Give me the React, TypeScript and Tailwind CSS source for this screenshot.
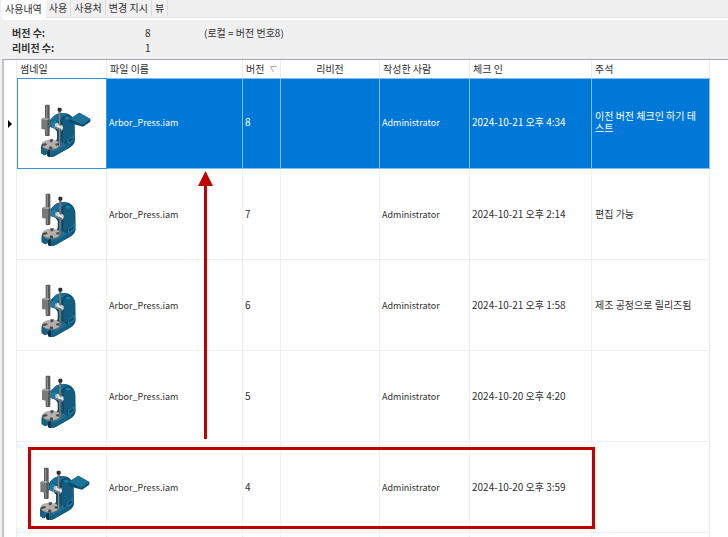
interface VersionRow {
  version: number;
  checkedIn: string;
  comment: string;
  handle?: boolean;
}

const TABS = ["사용내역", "사용", "사용처", "변경 지시", "뷰"];

const ROWS: VersionRow[] = [
  {
    version: 8,
    checkedIn: "2024-10-21 오후 4:34",
    comment: "이전 버전 체크인 하기 테스트",
    handle: true,
  },
  { version: 7, checkedIn: "2024-10-21 오후 2:14", comment: "편집 가능" },
  {
    version: 6,
    checkedIn: "2024-10-21 오후 1:58",
    comment: "제조 공정으로 릴리즈됨",
  },
  { version: 5, checkedIn: "2024-10-20 오후 4:20", comment: "" },
  { version: 4, checkedIn: "2024-10-20 오후 3:59", comment: "", handle: true },
];

export default function App() {
  return (
    <div className="flex h-screen flex-col overflow-hidden bg-[#f0f0f0] font-['Noto_Sans_CJK_KR',sans-serif] text-[10px] leading-3 text-[#303030]">
      <TabBar />
      <Summary />
      <div className="relative ml-0.5 flex-1 overflow-hidden border-t border-l-2 border-t-[#a5a5ad] border-l-[#c4c4c8] bg-white">
        <VersionTable />
        <Annotations />
      </div>
    </div>
  );
}

function TabBar() {
  return (
    <div
      role="tablist"
      className="flex h-[18px] border-b border-[#e3e3e3] pl-px"
    >
      {TABS.map((tab, i) => (
        <button
          key={tab}
          role="tab"
          aria-selected={i === 0}
          className={
            i === 0
              ? "h-[18px] bg-white px-1"
              : "h-4 border-r border-[#dcdcdc] px-[3px]"
          }
        >
          {tab}
        </button>
      ))}
    </div>
  );
}

function Summary() {
  return (
    <dl className="ml-[3px] grid h-[41px] grid-cols-[130px_62px_1fr] content-start gap-y-[3px] border-t-2 border-white pt-[7px] pl-[9px]">
      <dt className="font-bold">버전 수:</dt>
      <dd className="pl-[3px]">8</dd>
      <dd>(로컬 = 버전 번호8)</dd>
      <dt className="font-bold">리비전 수:</dt>
      <dd className="pl-[3px]">1</dd>
    </dl>
  );
}

const HEAD = "border-r border-[#ececec] px-[3px] text-left font-normal";

function VersionTable() {
  return (
    <table className="w-full table-fixed border-separate border-spacing-0">
      <colgroup>
        <col className="w-[13px]" />
        <col className="w-[90px]" />
        <col className="w-[136px]" />
        <col className="w-[38px]" />
        <col className="w-[99px]" />
        <col className="w-[90px]" />
        <col className="w-[122px]" />
        <col className="w-[118px]" />
        <col />
      </colgroup>
      <thead>
        <tr className="h-[18px]">
          <th className="border-r border-[#ececec] p-0" />
          <th className={HEAD}>썸네일</th>
          <th className={HEAD}>파일 이름</th>
          <th className={HEAD}>
            <div className="flex items-center justify-between">
              버전
              <SortIcon />
            </div>
          </th>
          <th className="border-r border-[#ececec] px-[3px] text-center font-normal">
            리비전
          </th>
          <th className={HEAD}>작성한 사람</th>
          <th className={HEAD}>체크 인</th>
          <th className={HEAD}>주석</th>
          <th className="p-0" />
        </tr>
      </thead>
      <tbody>
        {ROWS.map((row, i) => (
          <TableRow key={row.version} row={row} selected={i === 0} />
        ))}
        <tr className="h-[91px]">
          {Array.from({ length: 8 }, (_, i) => (
            <td key={i} className="border-r border-[#f0f0f0]" />
          ))}
          <td />
        </tr>
      </tbody>
    </table>
  );
}

function TableRow(p: { row: VersionRow; selected: boolean }) {
  const cell = p.selected
    ? "border-r border-b border-t border-[#83bdec] bg-[#0078d7] pr-2 pb-[3px] pl-0.5 text-white"
    : "border-r border-b border-[#f0f0f0] pr-2 pl-0.5";
  return (
    <tr className="h-[91px]">
      <td className="border-r border-[#f0f0f0] p-0">
        {p.selected && (
          <svg className="ml-1 h-2 w-1" viewBox="0 0 4 8" aria-hidden="true">
            <path d="M0 0L4 4L0 8Z" fill="#000" />
          </svg>
        )}
      </td>
      <td
        className={
          p.selected
            ? "border border-[#3a93de] p-0"
            : "border-r border-b border-[#f0f0f0] p-0"
        }
      >
        <PressThumbnail handle={p.row.handle} />
      </td>
      <td className={cell}>
        <span className="text-[9px]">Arbor_Press.iam</span>
      </td>
      <td className={cell}>{p.row.version}</td>
      <td className={cell} />
      <td className={cell}>
        <span className="text-[9px]">Administrator</span>
      </td>
      <td className={cell}>{p.row.checkedIn}</td>
      <td className={cell}>
        <div className="pl-px">{p.row.comment}</div>
      </td>
      <td />
    </tr>
  );
}

function Annotations() {
  return (
    <>
      <svg
        className="pointer-events-none absolute top-[111px] left-[194px] h-[268px] w-4"
        viewBox="0 0 16 268"
        aria-hidden="true"
      >
        <path d="M7.5 0L15 15H9V268H6V15H0Z" fill="#c00000" />
      </svg>
      <div className="pointer-events-none absolute top-[387px] left-6 h-[82px] w-[567px] border-3 border-[#c00000]" />
    </>
  );
}

function SortIcon() {
  return (
    <svg className="h-[7px] w-[7px]" viewBox="0 0 7 7" aria-hidden="true">
      <path d="M6.5 .5H.5L3.5 6" fill="none" stroke="#aaa" />
    </svg>
  );
}

function PressThumbnail(p: { handle?: boolean }) {
  return (
    <svg
      className="block h-[88px] w-[88px]"
      viewBox="0 0 264 264"
      role="img"
      aria-label="Arbor_Press"
    >
      <g transform={p.handle ? "translate(51 57)" : "translate(56 54)"}>
        {/* frame */}
        <path
          d="M44 66C56 46 72 40 88 42C106 44 117 56 119 72L120 122Q120 136 104 146L60 171Q48 176 38 172L36 165L28 169L18 162V140L40 124L60 128L66 120V98L58 88L44 84Z"
          fill="#0e4d6c"
        />
        <path
          d="M44 66C56 46 72 40 88 42L100 46C86 48 76 58 72 70L58 62Z"
          fill="#176f97"
        />
        <path d="M84 62Q96 48 112 58L117 72V108L98 116L84 140Z" fill="#125c80" />
        <path d="M88 56L98 52L106 58L96 63Z" fill="#1c7da6" />
        <path d="M97 120L118 106V122Q114 132 97 138Z" fill="#1a749b" />
        <path d="M101 123L113 115V122L101 130Z" fill="#0b3e59" />
        {/* base */}
        <path
          d="M18 145L36 154V165L28 169L18 162Z M40 156L62 157L100 136L112 139L60 171Q48 176 38 172Z"
          fill="#146184"
        />
        <path
          d="M18 142L40 125L82 130L96 138L60 158L36 157Z"
          fill="#1a7097"
        />
        <path d="M37 157L45 152V173L38 172Z" fill="#07293b" />
        {/* anvil plate */}
        <ellipse cx="47" cy="139" rx="27" ry="14" fill="#6e7173" />
        <ellipse cx="47" cy="136" rx="27" ry="14" fill="#b3b1ad" />
        <path
          d="M44 121H55L51 130H45Z M20 135L33 132L36 138L22 142Z M41 151L44 142L52 143L52 151Z M60 134L74 131V141L62 139Z"
          fill="#4d4c4a"
        />
        {/* ram and its guide */}
        <rect x="30" y="17" width="14" height="94" rx="3" fill="#56585a" />
        <rect x="33" y="20" width="4" height="88" fill="#8a8c8e" />
        <path d="M19 61L25 56L44 59V88L36 94L19 89Z" fill="#77797b" />
        <path d="M19 61L25 56L44 59L37 64Z" fill="#a4a6a8" />
        <path d="M37 64L44 59V88L37 94Z" fill="#56585a" />
        {/* pinion shaft */}
        <path d="M46 68L56 62L68 70L66 86L57 89L46 83Z" fill="#1b7ba4" />
        <path d="M59 74L68 71L84 81V90L79 95L59 86Z" fill="#c9c9c8" />
        <path d="M59 82L80 91L79 95L59 86Z" fill="#77797b" />
        {/* lever rod */}
        <rect x="71" y="33" width="6" height="110" fill="#5d6062" />
        <rect x="72" y="36" width="2" height="106" fill="#96999b" />
        <rect x="68" y="26" width="12" height="12" rx="4" fill="#2d2e2f" />
        <path d="M66 76L82 84L80 90L66 84Z" fill="#e2e2e1" />
        {p.handle && (
          <>
            <path
              d="M102 68L104 60L133 41L166 60V68L144 83L106 73Z"
              fill="#0e4d6c"
            />
            <path d="M104 60L133 41L166 60L143 77Z" fill="#1b7399" />
          </>
        )}
      </g>
    </svg>
  );
}
